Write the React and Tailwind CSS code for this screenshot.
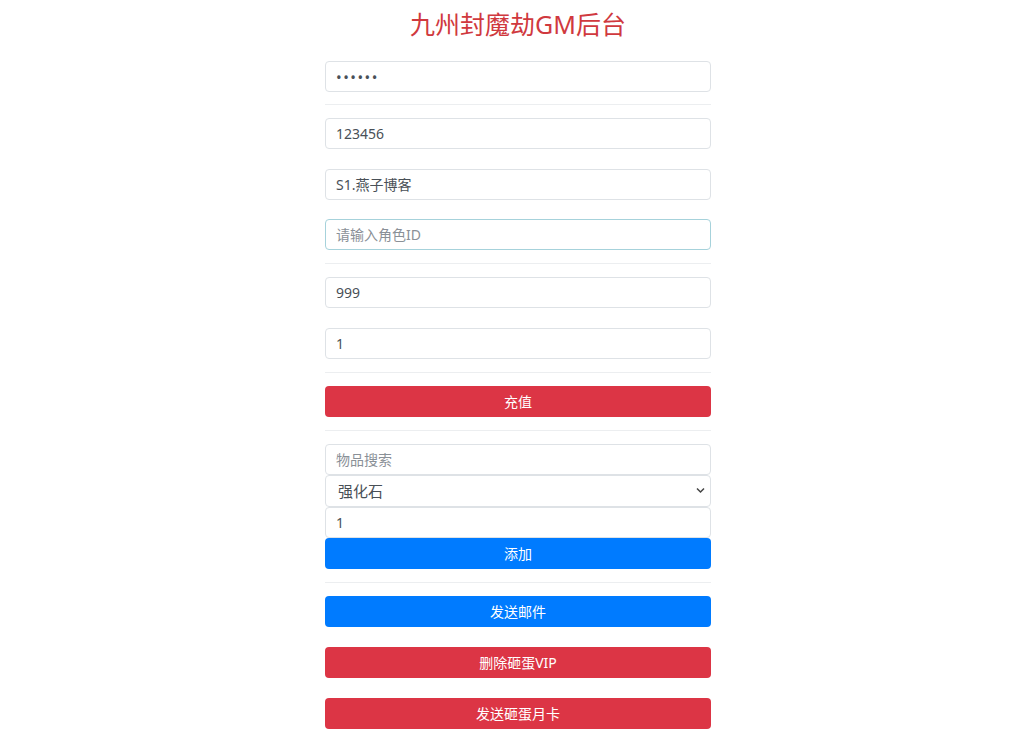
import React from "react";

const font = { fontFamily: '"Noto Sans", "Noto Sans CJK SC", sans-serif' };

function Input({ value, placeholder, focus, type = "text" }) {
  return (
    <input
      readOnly
      type={type}
      defaultValue={value}
      placeholder={placeholder}
      className={
        "block w-full h-[31px] rounded-[4px] border bg-white px-[10px] text-[14px] text-[#495057] placeholder:text-[#8a9097] outline-none " +
        (focus ? "border-[#a6d2db] " : "border-[#dee2e6] ") +
        (type === "password" ? "tracking-[1.5px] text-[15px]" : "")
      }
    />
  );
}

function Btn({ children, color }) {
  return (
    <button
      className={
        "block w-full h-[31px] rounded-[4px] text-white text-[14px] " +
        (color === "red" ? "bg-[#dc3545]" : "bg-[#007bff]")
      }
    >
      {children}
    </button>
  );
}

function Hr({ cls = "mt-[12px] mb-[13px]" }) {
  return <div className={cls + " border-t border-[#eceef0]"} />;
}

export default function App() {
  return (
    <div className="min-h-[732px] bg-white pl-3 flex justify-center" style={font}>
      <div className="w-[386px]">
        <h1 className="pt-[6px] text-center text-[25px] leading-[36px] text-[#d0393e] mb-[19px]">
          九州封魔劫GM后台
        </h1>
        <Input type="password" value="123456" />
        <Hr />
        <div className="flex flex-col gap-[19.5px]">
          <Input value="123456" />
          <Input value="S1.燕子博客" />
          <Input placeholder="请输入角色ID" focus />
        </div>
        <Hr cls="mt-[13px] mb-[13px]" />
        <div className="flex flex-col gap-[20px]">
          <Input value="999" />
          <Input value="1" />
        </div>
        <Hr cls="mt-[13px] mb-[13px]" />
        <Btn color="red">充值</Btn>
        <Hr cls="mt-[13px] mb-[13px]" />
        <div className="flex flex-col">
          <Input placeholder="物品搜索" />
          <div className="relative">
            <select
              className="block w-full h-[32px] appearance-none rounded-[4px] border border-[#dee2e6] bg-white pl-[12px] text-[15px] text-[#495057] outline-none"
              defaultValue="强化石"
            >
              <option>强化石</option>
            </select>
            <svg
              className="absolute right-[6px] top-[12px]"
              width="9"
              height="7"
              viewBox="0 0 9 7"
              fill="none"
            >
              <path d="M1 1.5l3.5 3.5 3.5-3.5" stroke="#444" strokeWidth="1.5" />
            </svg>
          </div>
          <Input value="1" />
          <Btn color="blue">添加</Btn>
        </div>
        <Hr cls="mt-[13px] mb-[13px]" />
        <div className="flex flex-col gap-[20px]">
          <Btn color="blue">发送邮件</Btn>
          <Btn color="red">删除砸蛋VIP</Btn>
          <Btn color="red">发送砸蛋月卡</Btn>
        </div>
      </div>
    </div>
  );
}
